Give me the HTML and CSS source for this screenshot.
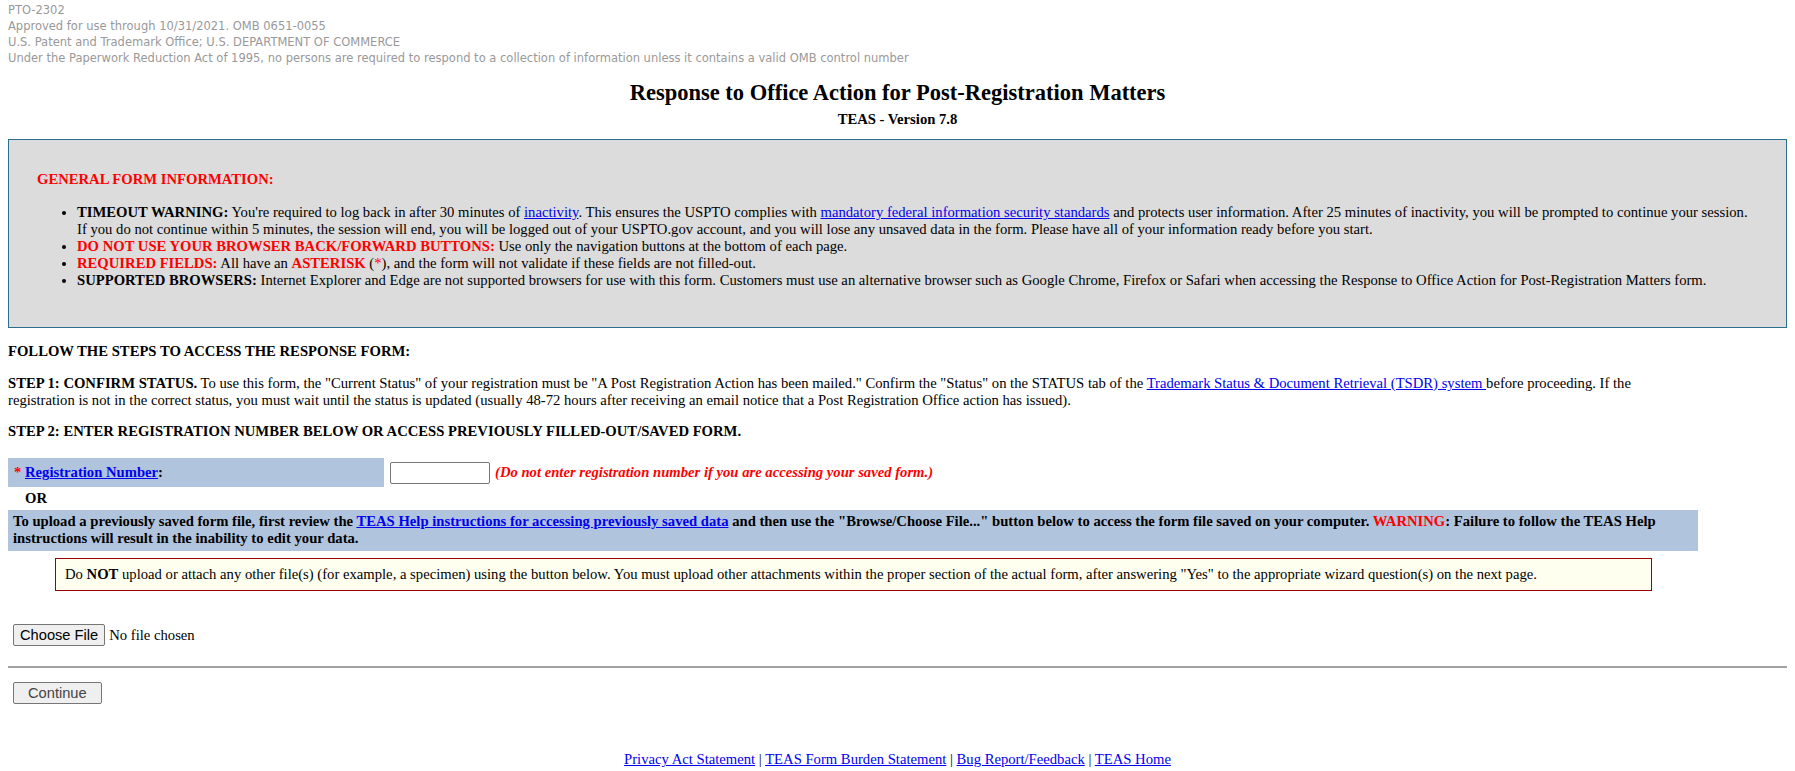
FILE: index.html
```html
<!DOCTYPE html>
<html lang="en">

<head>
	<meta charset="UTF-8">
	<title>Response to Office Action for Post-Registration Matters</title>
	<link rel="stylesheet" href="styles.css">
</head>

<body>
	<!-- OMB notice -->
	<div class="omb">
		PTO-2302<br>
		Approved for use through 10/31/2021. OMB 0651-0055<br>
		U.S. Patent and Trademark Office; U.S. DEPARTMENT OF COMMERCE<br>
		Under the Paperwork Reduction Act of 1995, no persons are required to respond to a collection of information unless it contains a valid OMB control number
	</div>

	<div class="title">
		<h2>Response to Office Action for Post-Registration Matters</h2>
		<div class="version">TEAS - Version 7.8</div>
	</div>

	<!-- general info -->
	<div class="info-box">
		<p class="info-head">GENERAL FORM INFORMATION:</p>
		<ul>
			<li><b>TIMEOUT WARNING:</b> You're required to log back in after 30 minutes of <a href="#">inactivity</a>. This ensures the USPTO complies with <a href="#">mandatory federal information security standards</a> and protects user information. After 25 minutes of inactivity, you will be prompted to continue your session. If you do not continue within 5 minutes, the session will end, you will be logged out of your USPTO.gov account, and you will lose any unsaved data in the form. Please have all of your information ready before you start.</li>
			<li><span class="red">DO NOT USE YOUR BROWSER BACK/FORWARD BUTTONS:</span> Use only the navigation buttons at the bottom of each page.</li>
			<li><span class="red">REQUIRED FIELDS:</span> All have an <span class="red">ASTERISK</span> (<span class="red-plain">*</span>), and the form will not validate if these fields are not filled-out.</li>
			<li><b>SUPPORTED BROWSERS:</b> Internet Explorer and Edge are not supported browsers for use with this form. Customers must use an alternative browser such as Google Chrome, Firefox or Safari when accessing the Response to Office Action for Post-Registration Matters form.</li>
		</ul>
	</div>

	<!-- steps -->
	<div class="steps">
		<p><b>FOLLOW THE STEPS TO ACCESS THE RESPONSE FORM:</b></p>
		<p><b>STEP 1: CONFIRM STATUS.</b> To use this form, the "Current Status" of your registration must be "A Post Registration Action has been mailed." Confirm the "Status" on the STATUS tab of the <a href="#">Trademark Status &amp; Document Retrieval (TSDR) system </a>before proceeding. If the registration is not in the correct status, you must wait until the status is updated (usually 48-72 hours after receiving an email notice that a Post Registration Office action has issued).</p>
		<p><b>STEP 2: ENTER REGISTRATION NUMBER BELOW OR ACCESS PREVIOUSLY FILLED-OUT/SAVED FORM.</b></p>

		<div class="reg-row">
			<div class="reg-label"><span class="red-plain">*</span> <a href="#">Registration Number</a>:</div>
			<input type="text" class="reg-input">
			<span class="reg-note">(Do not enter registration number if you are accessing your saved form.)</span>
		</div>
		<div class="or">OR</div>
		<div class="upload-note">To upload a previously saved form file, first review the <a href="#">TEAS Help instructions for accessing previously saved data</a> and then use the "Browse/Choose File..." button below to access the form file saved on your computer. <span class="red-plain">WARNING</span>: Failure to follow the TEAS Help instructions will result in the inability to edit your data.</div>
		<div class="warn-box">Do <b>NOT</b> upload or attach any other file(s) (for example, a specimen) using the button below. You must upload other attachments within the proper section of the actual form, after answering "Yes" to the appropriate wizard question(s) on the next page.</div>

		<div class="file-row">
			<button class="btn">Choose File</button>
			<span>No file chosen</span>
		</div>
	</div>

	<hr>

	<button class="btn btn-continue">Continue</button>

	<div class="footer">
		<a href="#">Privacy Act Statement</a> | <a href="#">TEAS Form Burden Statement</a> | <a href="#">Bug Report/Feedback</a> | <a href="#">TEAS Home</a>
	</div>
</body>

</html>
```

FILE: styles.css
```css
body {
	margin: 0 8px;
	font-family: "Liberation Serif", "Times New Roman", serif;
	font-size: 14.67px;
	line-height: 17px;
	color: #000;
	background-color: #FFF;
}

a {
	color: #0000EE;
}

p {
	margin: 14.67px 0;
}

.red {
	color: #FF0000;
	font-weight: bold;
}

.red-plain {
	color: #FF0000;
}

.omb {
	padding-top: 2px;
	font-family: "DejaVu Sans", Verdana, sans-serif;
	font-size: 11.5px;
	line-height: 16px;
	color: #999;
}

.title {
	margin-top: 14px;
	text-align: center;
}

.title h2 {
	margin: 0;
	font-size: 22.5px;
	line-height: 26px;
}

.version {
	margin-top: 5px;
	font-weight: bold;
	line-height: 17px;
}

.info-box {
	margin-top: 11px;
	padding: 16px 28px 24px;
	border: 1px solid #2B6F8F;
	background-color: #DCDCDC;
}

.info-head {
	color: #FF0000;
	font-weight: bold;
}

.info-box ul {
	margin: 16px 0 14.67px;
	padding-left: 40px;
}

.steps {
	width: 95%;
}

.reg-row {
	display: flex;
	align-items: center;
	margin-top: 18px;
}

.reg-label {
	width: 370px;
	height: 29px;
	padding-left: 6px;
	line-height: 29px;
	font-weight: bold;
	background-color: #B0C4DE;
}

.reg-input {
	width: 100px;
	height: 22px;
	margin: 0 5px 0 6px;
	box-sizing: border-box;
	border: 1px solid #767676;
	border-radius: 2px;
	background-color: #FFF;
}

.reg-note {
	color: #FF0000;
	font-weight: bold;
	font-style: italic;
}

.or {
	margin-top: 3px;
	padding-left: 17px;
	font-weight: bold;
}

.upload-note {
	margin-top: 3px;
	padding: 3px 5px 4px;
	font-weight: bold;
	background-color: #B0C4DE;
}

.warn-box {
	margin: 7px 46px 0 47px;
	padding: 7px 9px;
	border: 1px solid #990000;
	background-color: #FFFFF0;
}

.file-row {
	display: flex;
	align-items: center;
	gap: 4px;
	margin-top: 33px;
	padding-left: 5px;
}

.btn {
	height: 22px;
	padding: 0 6px;
	box-sizing: border-box;
	border: 1px solid #767676;
	border-radius: 2px;
	background-color: #EFEFEF;
	font-family: "Liberation Sans", Arial, sans-serif;
	font-size: 14.67px;
	color: #000;
}

hr {
	height: 0;
	margin: 20px 0 0;
	border: none;
	border-top: 2px solid #A0A0A0;
}

.btn-continue {
	margin: 14px 0 0 5px;
	padding: 0 14px;
	color: #444;
}

.footer {
	margin-top: 47px;
	text-align: center;
}
```
